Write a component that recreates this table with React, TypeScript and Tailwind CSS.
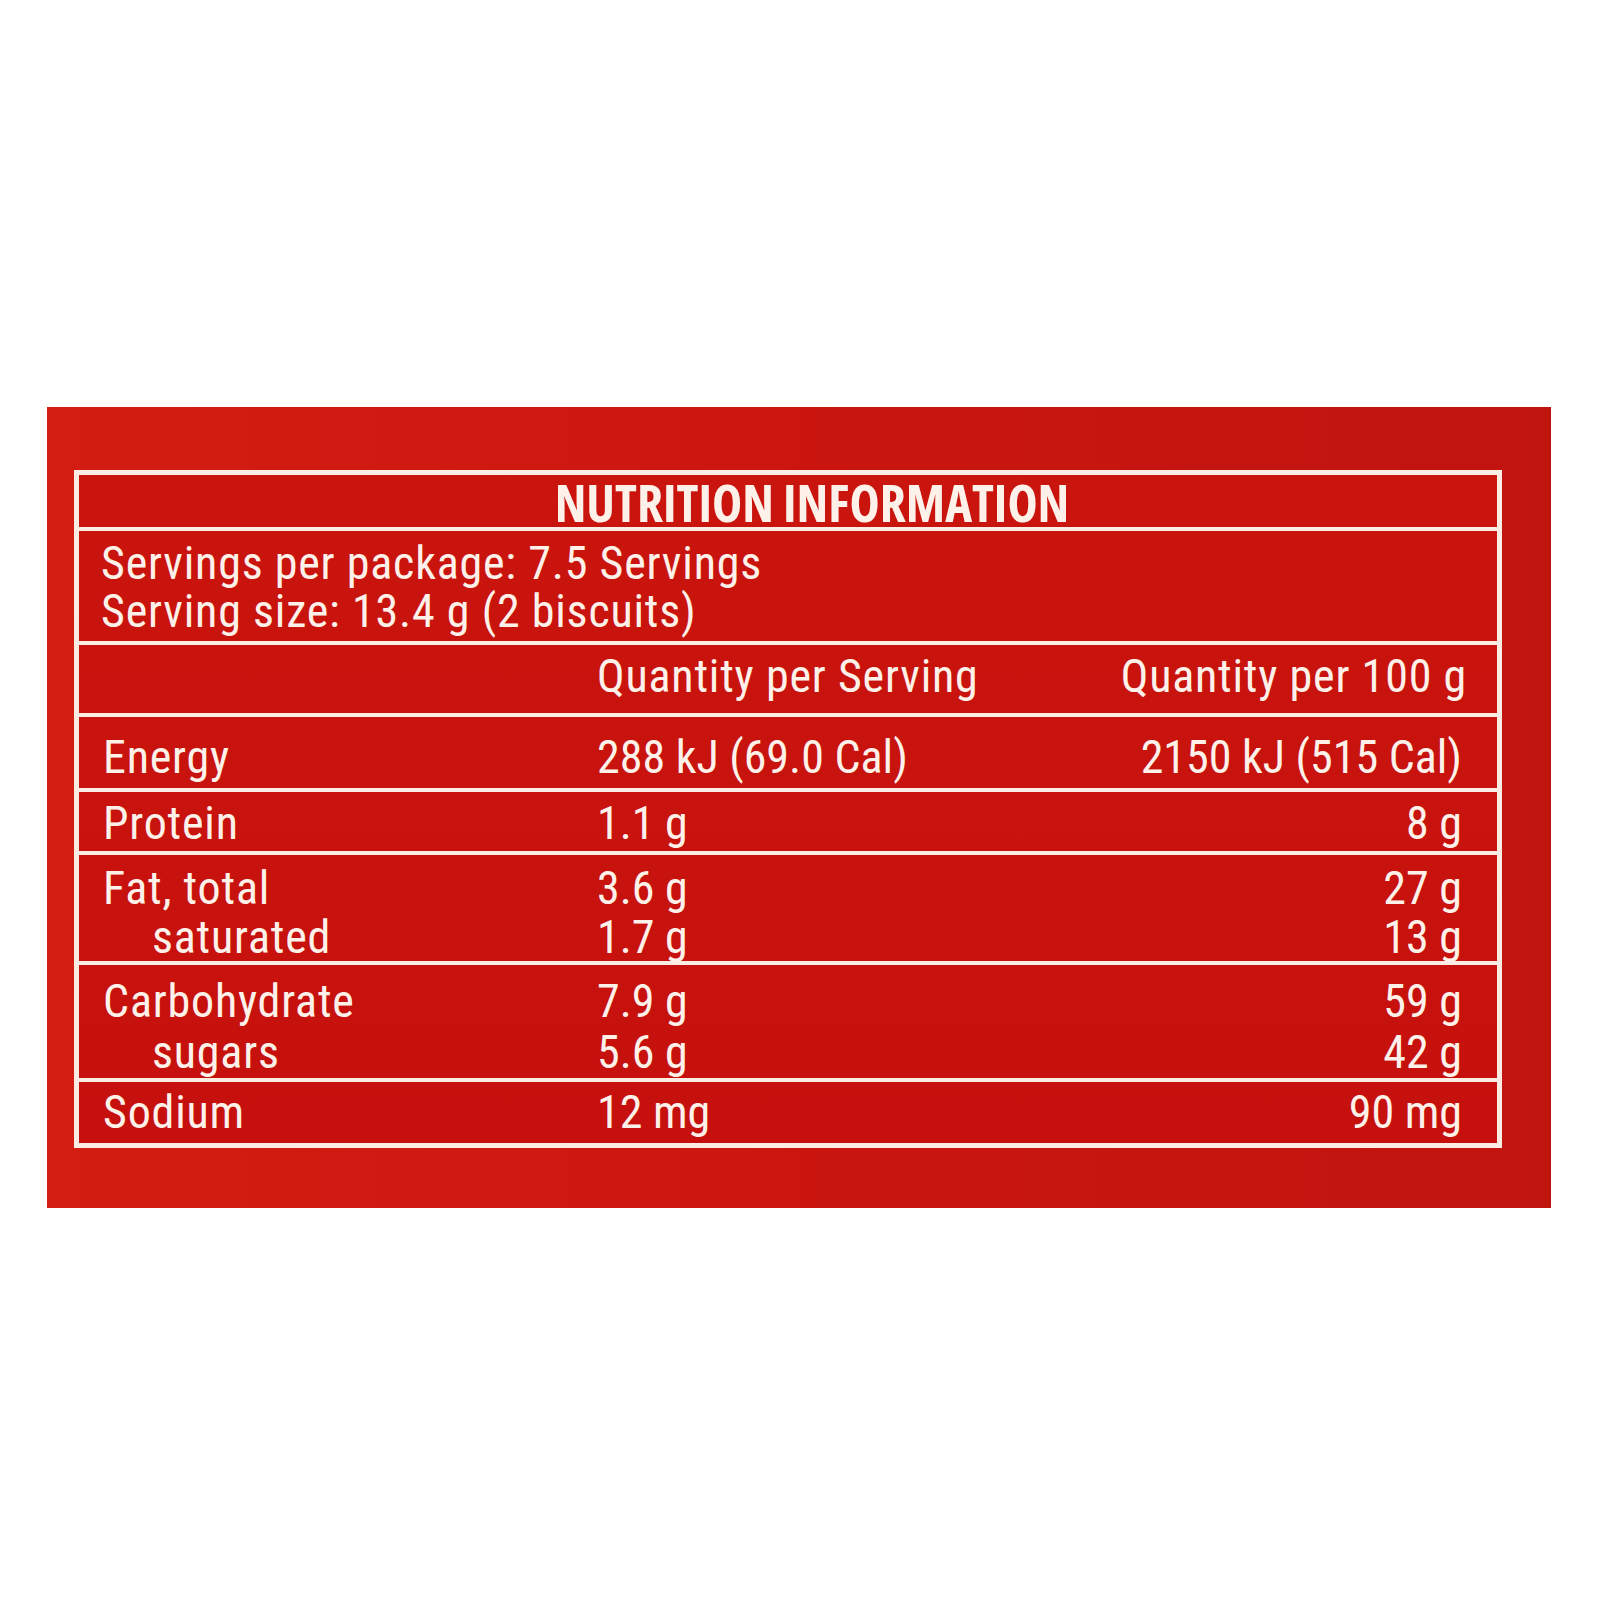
type Line = { label: string; indent?: boolean; serving: string; per100: string };
type Row = { lines: Line[]; h: string; pt: string };

const ROWS: Row[] = [
  {
    lines: [{ label: "Energy", serving: "288 kJ (69.0 Cal)", per100: "2150 kJ (515 Cal)" }],
    h: "h-[75px]",
    pt: "pt-[16px]",
  },
  { lines: [{ label: "Protein", serving: "1.1 g", per100: "8 g" }], h: "h-[63px]", pt: "pt-[7px]" },
  {
    lines: [
      { label: "Fat, total", serving: "3.6 g", per100: "27 g" },
      { label: "saturated", indent: true, serving: "1.7 g", per100: "13 g" },
    ],
    h: "h-[110px]",
    pt: "pt-[9px]",
  },
  {
    lines: [
      { label: "Carbohydrate", serving: "7.9 g", per100: "59 g" },
      { label: "sugars", indent: true, serving: "5.6 g", per100: "42 g" },
    ],
    h: "h-[117px]",
    pt: "pt-[12px]",
  },
  { lines: [{ label: "Sodium", serving: "12 mg", per100: "90 mg" }], h: "h-[65px]", pt: "pt-[6px]" },
];

const ink = "text-[#fdf1ea]";
const rule = "border-t-4 border-[#fbece4]";
const body = "font-['Roboto_Condensed','Open_Sans',sans-serif] text-[46px] leading-[48px] tracking-[0.8px]";

export default function App() {
  return (
    <div className="min-h-[1600px] bg-white pt-[407px] pl-[47px]">
      <div className="w-[1504px] h-[801px] pt-[63px] pl-[27px] bg-gradient-to-r from-[#d41d12] via-[#cb1610] to-[#c0140f]">
        <div className={`w-[1428px] border-[5px] border-[#fbece4] ${ink} bg-gradient-to-b from-[#ca150e] to-[#c5100d]`}>
          {/* title */}
          <div className="h-[52px] pt-[1px] pl-[48px] flex justify-center">
            <span className="font-['Open_Sans',sans-serif] font-stretch-condensed text-[51px] leading-[52px] font-bold">
              NUTRITION INFORMATION
            </span>
          </div>

          {/* servings */}
          <div className={`${rule} ${body} h-[114px] pt-[8px] pl-[22px]`}>
            <div>Servings per package: 7.5 Servings</div>
            <div>Serving size: 13.4 g (2 biscuits)</div>
          </div>

          {/* column headings */}
          <div className={`${rule} ${body} h-[72px] pt-[7px] pl-[24px] pr-[30px] grid grid-cols-[494px_1fr_1fr]`}>
            <div />
            <div>Quantity per Serving</div>
            <div className="text-right">Quantity per 100 g</div>
          </div>

          {ROWS.map((row) => (
            <div
              key={row.lines[0].label}
              className={`${rule} ${body} ${row.h} ${row.pt} pl-[24px] pr-[35px] grid grid-cols-[494px_1fr_1fr]`}
            >
              {row.lines.map((ln) => (
                <div key={ln.label} className="contents">
                  <div className={ln.indent ? "pl-[49px]" : ""}>{ln.label}</div>
                  <div className="tracking-normal">{ln.serving}</div>
                  <div className="text-right tracking-normal">{ln.per100}</div>
                </div>
              ))}
            </div>
          ))}
        </div>
      </div>
    </div>
  );
}
